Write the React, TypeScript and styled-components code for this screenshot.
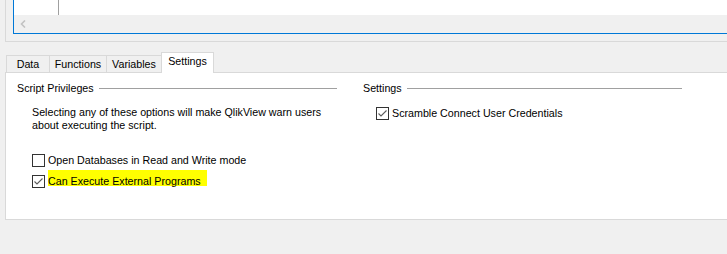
import React from "react";
import styled, { createGlobalStyle } from "styled-components";

const Global = createGlobalStyle`
  html, body { margin: 0; padding: 0; }
  body {
    background: #f0f0f0;
    font-family: "Liberation Sans", Arial, sans-serif;
    font-size: 10.7px;
    color: #000;
    width: 727px;
    height: 254px;
    overflow: hidden;
  }
`;

const Page = styled.div`
  width: 727px;
  height: 254px;
  overflow: hidden;
  display: flex;
  flex-direction: column;
`;

const TopFrame = styled.div`
  margin-left: 5px;
  border-left: 1px solid #d9d9d9;
  border-bottom: 1px solid #d9d9d9;
  padding: 0 0 7px 7px;
  height: 34px;
`;

const GridBox = styled.div`
  border-left: 1px solid #0078d7;
  border-bottom: 1px solid #0078d7;
  height: 33px;
  display: flex;
  flex-direction: column;
`;

const GridRow = styled.div`
  height: 15px;
  background: #fff;
  display: flex;
`;

const GridCell = styled.div<{ $w: number }>`
  width: ${(p) => p.$w}px;
  border-right: 1px solid #a0a0a0;
`;

const HScroll = styled.div`
  height: 18px;
  background: #f0f0f0;
  display: flex;
  align-items: center;
  padding-left: 6px;
`;

const TabStrip = styled.div`
  margin-top: 10px;
  height: 20px;
  display: flex;
  align-items: flex-end;
  padding-left: 6px;
  position: relative;
  z-index: 1;
`;

const Tab = styled.div<{ $w: number; $active?: boolean }>`
  box-sizing: border-box;
  width: ${(p) => p.$w}px;
  height: ${(p) => (p.$active ? 21 : 17)}px;
  margin-bottom: ${(p) => (p.$active ? -1 : 0)}px;
  margin-left: -1px;
  border: 1px solid #d9d9d9;
  border-bottom: none;
  background: ${(p) => (p.$active ? "#fff" : "#f0f0f0")};
  display: flex;
  align-items: center;
  justify-content: center;
  padding-bottom: ${(p) => (p.$active ? 3 : 0)}px;
  line-height: 13px;
  &:first-child { margin-left: 0; }
`;

const Panel = styled.div`
  margin-left: 5px;
  height: 137px;
  background: #fff;
  border: 1px solid #d9d9d9;
  border-right: none;
  display: flex;
  gap: 26px;
  padding: 9px 0 0 11px;
  box-sizing: content-box;
`;

const Group = styled.div<{ $w: number }>`
  width: ${(p) => p.$w}px;
  display: flex;
  flex-direction: column;
`;

const GroupTitle = styled.div`
  display: flex;
  align-items: center;
  gap: 5px;
  line-height: 13px;
  height: 13px;
  white-space: nowrap;
  &::after {
    content: "";
    flex: 1;
    height: 1px;
    background: #a0a0a0;
  }
`;

const Description = styled.div`
  margin: 11px 0 0 15px;
  line-height: 13px;
  width: 300px;
`;

const Options = styled.div<{ $top: number; $indent: number }>`
  margin: ${(p) => p.$top}px 0 0 ${(p) => p.$indent}px;
  display: flex;
  flex-direction: column;
  gap: 8px;
`;

const Row = styled.div`
  display: flex;
  align-items: flex-start;
  height: 13px;
`;

const Box = styled.div`
  box-sizing: border-box;
  width: 13px;
  height: 13px;
  border: 1px solid #333;
  background: #fff;
  flex: none;
  display: flex;
  align-items: center;
  justify-content: center;
`;

const Label = styled.span<{ $highlight?: boolean }>`
  margin-left: 3px;
  line-height: 13px;
  white-space: nowrap;
  ${(p) =>
    p.$highlight
      ? `
    margin-top: -5px;
    padding: 5px 6px 0 0;
    background: linear-gradient(#ffff00, #ffff00) top left / 100% 16px no-repeat;
  `
      : ""}
`;

const Check = () => (
  <svg width="11" height="11" viewBox="0 0 11 11">
    <path d="M1.5 5.5 L4 8 L9.5 2.5" fill="none" stroke="#5c5c5c" strokeWidth="1.1" />
  </svg>
);

const CheckRow = ({ label, checked, highlight }: { label: string; checked?: boolean; highlight?: boolean }) => (
  <Row>
    <Box>{checked && <Check />}</Box>
    <Label $highlight={highlight}>{label}</Label>
  </Row>
);

export default function App() {
  return (
    <Page>
      <Global />
      <TopFrame>
        <GridBox>
          <GridRow>
            <GridCell $w={44} />
          </GridRow>
          <HScroll>
            <svg width="7" height="8" viewBox="0 0 7 8">
              <path d="M5 0.5 L1.5 4 L5 7.5" fill="none" stroke="#c2c2c2" strokeWidth="1.6" />
            </svg>
          </HScroll>
        </GridBox>
      </TopFrame>
      <TabStrip>
        <Tab $w={44}>Data</Tab>
        <Tab $w={58}>Functions</Tab>
        <Tab $w={56}>Variables</Tab>
        <Tab $w={53} $active>Settings</Tab>
      </TabStrip>
      <Panel>
        <Group $w={320}>
          <GroupTitle>Script Privileges</GroupTitle>
          <Description>
            Selecting any of these options will make QlikView warn users about executing the script.
          </Description>
          <Options $top={22} $indent={15}>
            <CheckRow label="Open Databases in Read and Write mode" />
            <CheckRow label="Can Execute External Programs" checked highlight />
          </Options>
        </Group>
        <Group $w={319}>
          <GroupTitle>Settings</GroupTitle>
          <Options $top={12} $indent={13}>
            <CheckRow label="Scramble Connect User Credentials" checked />
          </Options>
        </Group>
      </Panel>
    </Page>
  );
}
